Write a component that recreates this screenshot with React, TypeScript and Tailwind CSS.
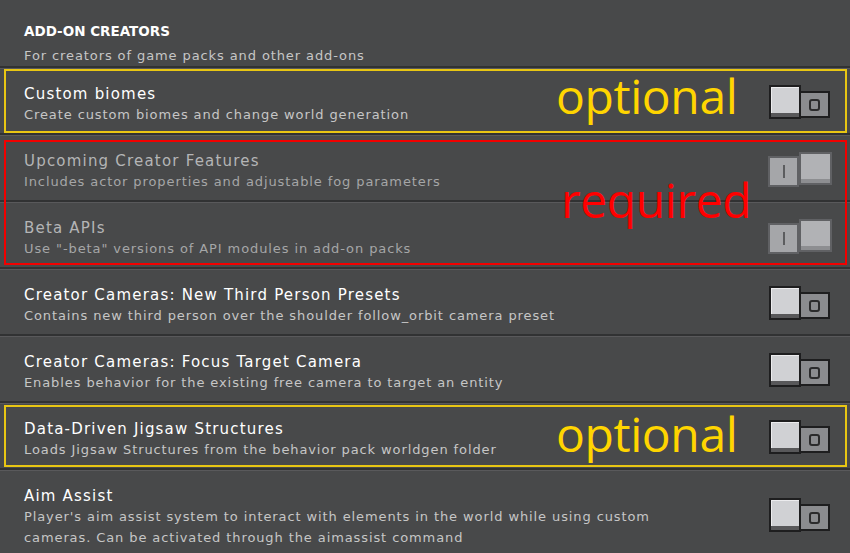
import React from 'react'

type Setting = {
  title: string
  desc: string[]
  on?: boolean
  locked?: boolean
}

const TEXT_FONT = "font-['DejaVu_Sans',sans-serif]"
const NOTE_FONT = "font-['Open_Sans',sans-serif]"

const creatorCameras: Setting[] = [
  {
    title: 'Creator Cameras: New Third Person Presets',
    desc: ['Contains new third person over the shoulder follow_orbit camera preset'],
  },
  {
    title: 'Creator Cameras: Focus Target Camera',
    desc: ['Enables behavior for the existing free camera to target an entity'],
  },
]

function Separator() {
  return (
    <div>
      <div className="h-[2px] bg-[#313233]" />
      <div className="h-px bg-[#59595b]" />
    </div>
  )
}

function Toggle({ on }: { on?: boolean }) {
  if (on) {
    // locked "on" state: track on the left, greyed knob on the right
    return (
      <div className="flex items-start w-[64px]">
        <div className="mt-[4px] w-[31px] h-[31px] bg-[#606164] p-[2px]">
          <div className="w-full h-full bg-[#a5a6a9] flex items-center justify-center">
            <div className="w-[2px] h-[13px] bg-[#5c5d5f]" />
          </div>
        </div>
        <div className="w-[33px] h-[33px] bg-[#606164] p-[2px] flex flex-col">
          <div className="flex-1 bg-[#b1b2b5]" />
          <div className="h-[4px] bg-[#8d8e91]" />
        </div>
      </div>
    )
  }
  return (
    <div className="flex items-start w-[64px] pl-px">
      <div className="w-[32px] h-[34px] bg-[#1e1e1f] p-[2px] flex flex-col">
        <div className="flex-1 bg-[#d0d1d4] border-t border-l border-[#ececee]" />
        <div className="h-[4px] bg-[#58585a]" />
      </div>
      <div className="mt-[6px] w-[29px] h-[27px] bg-[#1e1e1f] p-[2px] pl-0">
        <div className="w-full h-full bg-[#8b8c8f] flex items-center justify-center">
          <div className="w-[11px] h-[12px] border-2 border-[#2b2b2c] rounded-[3px]" />
        </div>
      </div>
    </div>
  )
}

function SettingRow({ s, tall }: { s: Setting; tall?: boolean }) {
  return (
    <div className={`flex justify-between pl-6 ${tall ? 'h-[82px]' : 'h-[64px]'}`}>
      <div className="pt-[15px]">
        <div
          className={`text-[15px] leading-[20px] tracking-[1.2px] ${s.locked ? 'text-[#b4b5b6]' : 'text-white'}`}
        >
          {s.title}
        </div>
        {s.desc.map((line) => (
          <div
            key={line}
            className={`text-[13px] leading-[21px] tracking-[0.9px] ${s.locked ? 'text-[#a5a6a7]' : 'text-[#c6c6c6]'}`}
          >
            {line}
          </div>
        ))}
      </div>
      <div className={`mr-[18px] ${tall ? 'pt-[27px]' : 'pt-[16px]'}`}>
        <Toggle on={s.on} />
      </div>
    </div>
  )
}

function Note({ children, className }: { children: React.ReactNode; className: string }) {
  return (
    <span className={`absolute ${NOTE_FONT} text-[48px] leading-none tracking-[-0.4px] ${className}`}>
      {children}
    </span>
  )
}

export default function App() {
  return (
    <div className={`w-full h-[553px] overflow-hidden bg-[#48494a] ${TEXT_FONT}`}>
      <div className="h-[66px] pl-6 pt-[21px]">
        <div className="text-[13.5px] leading-[20px] font-bold text-white">ADD-ON CREATORS</div>
        <div className="mt-[4px] text-[13px] leading-[21px] tracking-[0.9px] text-[#c6c6c6]">
          For creators of game packs and other add-ons
        </div>
      </div>
      <Separator />

      <div className="relative">
        <SettingRow s={{ title: 'Custom biomes', desc: ['Create custom biomes and change world generation'] }} />
        <div className="pointer-events-none absolute inset-y-0 left-[4px] right-[3px] border-2 border-[#e8c613]" />
        <Note className="left-[556px] top-[3px] text-[#ffd500]">optional</Note>
      </div>
      <Separator />

      <div className="relative">
        <SettingRow
          s={{
            title: 'Upcoming Creator Features',
            desc: ['Includes actor properties and adjustable fog parameters'],
            on: true,
            locked: true,
          }}
        />
        <Separator />
        <SettingRow
          s={{
            title: 'Beta APIs',
            desc: ['Use "-beta" versions of API modules in add-on packs'],
            on: true,
            locked: true,
          }}
        />
        <div className="pointer-events-none absolute top-[4px] bottom-[2px] left-[4px] right-[3px] border-2 border-[#f20000]" />
        <Note className="left-[561px] top-[40px] text-[#ff0000]">required</Note>
      </div>
      <Separator />

      {creatorCameras.map((s) => (
        <div key={s.title}>
          <SettingRow s={s} />
          <Separator />
        </div>
      ))}

      <div className="relative">
        <SettingRow
          s={{
            title: 'Data-Driven Jigsaw Structures',
            desc: ['Loads Jigsaw Structures from the behavior pack worldgen folder'],
          }}
        />
        <div className="pointer-events-none absolute top-px bottom-px left-[4px] right-[3px] border-2 border-[#e8c613]" />
        <Note className="left-[556px] top-[6px] text-[#ffd500]">optional</Note>
      </div>
      <Separator />

      <SettingRow
        tall
        s={{
          title: 'Aim Assist',
          desc: [
            "Player's aim assist system to interact with elements in the world while using custom",
            'cameras. Can be activated through the aimassist command',
          ],
        }}
      />
    </div>
  )
}
